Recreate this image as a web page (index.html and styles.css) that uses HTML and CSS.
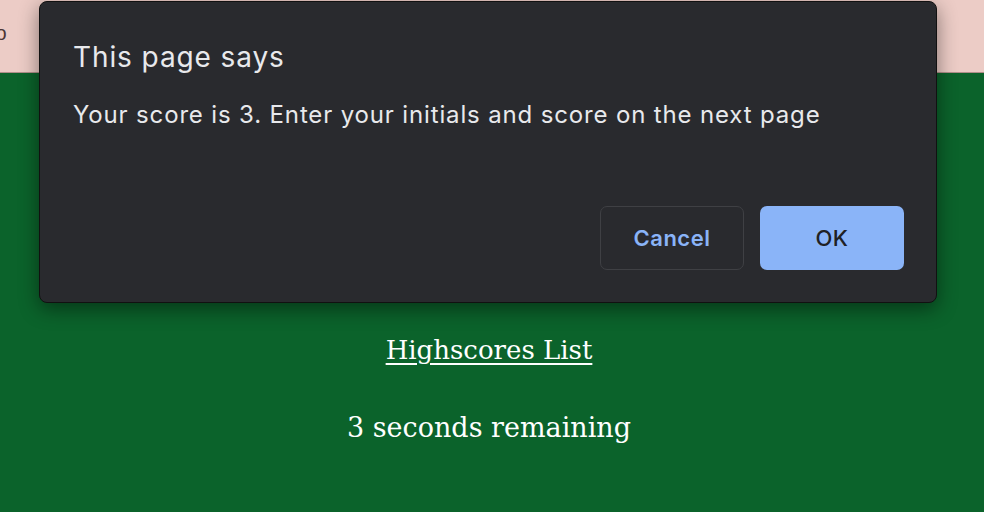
FILE: index.html
```html
<!DOCTYPE html>
<html>
<head>
<meta charset="utf-8">
<link rel="stylesheet" href="styles.css">
</head>
<body>
<header class="topbar"><span class="cut">Go</span></header>
<main class="content">
  <a class="link" href="#">Highscores List</a>
  <p class="timer">3 seconds remaining</p>
</main>
<div class="dialog">
  <h1 class="title">This page says</h1>
  <p class="msg">Your score is 3. Enter your initials and score on the next page</p>
  <div class="actions">
    <button class="btn cancel">Cancel</button>
    <button class="btn ok">OK</button>
  </div>
</div>
</body>
</html>
```
FILE: styles.css
```css
html, body {
  margin: 0;
  padding: 0;
  height: 100%;
}
body {
  background: #0b632b;
  font-family: "Liberation Serif", serif;
  overflow: hidden;
  position: relative;
}
.topbar {
  height: 72px;
  background: #ecccc6;
  border-bottom: 1px solid #b08f8a;
  position: relative;
  overflow: hidden;
}
.cut {
  position: absolute;
  left: -20px;
  top: 22px;
  font-family: "Liberation Sans", sans-serif;
  font-size: 20px;
  color: #4a3533;
}
.content {
  display: flex;
  flex-direction: column;
  align-items: center;
  padding-top: 262px;
  padding-right: 6px;
  color: #fff;
  font-family: "DejaVu Serif", serif;
}
.link {
  color: #fff;
  font-size: 26px;
  text-decoration: underline;
  text-underline-offset: 4px;
  text-decoration-thickness: 2px;
}
.timer {
  margin: 47px 0 0;
  font-size: 27px;
}
.dialog {
  position: absolute;
  left: 39px;
  top: 1px;
  width: 898px;
  height: 302px;
  box-sizing: border-box;
  background: #292a2e;
  border: 1px solid #111;
  border-radius: 8px;
  box-shadow: 0 6px 20px rgba(0,0,0,0.45);
  padding: 36px 32px 0 33px;
  font-family: "Inter", sans-serif;
  color: #e8e9ec;
  display: flex;
  flex-direction: column;
}
.title {
  margin: 0;
  font-size: 28px;
  font-weight: 400;
  letter-spacing: 0.9px;
  line-height: 38px;
}
.msg {
  margin: 22px 0 0;
  font-size: 24px;
  letter-spacing: 0.85px;
  line-height: 34px;
}
.actions {
  display: flex;
  justify-content: flex-end;
  gap: 16px;
  margin-top: 74px;
}
.btn {
  width: 144px;
  height: 64px;
  border-radius: 7px;
  font-family: "Inter", sans-serif;
  font-size: 22px;
  font-weight: 600;
  letter-spacing: 0.5px;
}
.cancel {
  background: transparent;
  border: 1px solid #3f4044;
  color: #8ab4f8;
}
.ok {
  background: #8ab4f8;
  border: none;
  color: #202124;
  font-weight: 500;
}
```
